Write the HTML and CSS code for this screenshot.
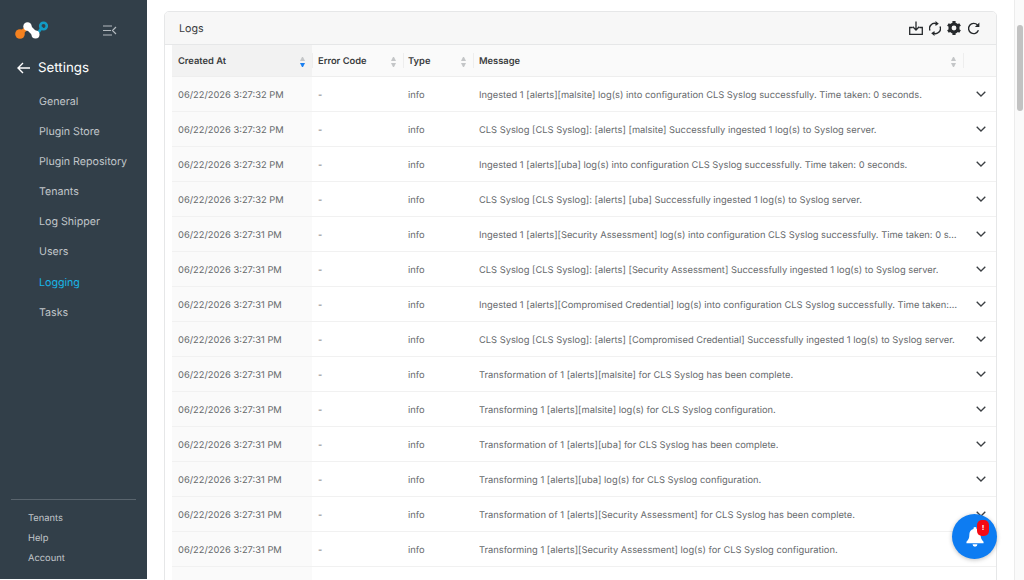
FILE: index.html
```html
<!DOCTYPE html>
<html lang="en">
<head>
    <meta charset="UTF-8">
    <meta name="viewport" content="width=device-width, initial-scale=1.0">
    <title>Logs</title>
    <link rel="stylesheet" href="styles.css">
</head>
<body>
    <aside class="sidebar">
        <div class="brand">
            <svg class="logo" width="36" height="22" viewBox="0 0 36 22" fill="none">
                <path d="M6 14 L12 8.500" stroke="#f58220" stroke-width="4" stroke-linecap="round"/>
                <circle cx="6" cy="14" r="4.800" fill="#f58220"/>
                <path d="M25 11.500 L27.500 8" stroke="#129bc4" stroke-width="2.800" stroke-linecap="round"/>
                <circle cx="29.500" cy="6" r="3.300" stroke="#129bc4" stroke-width="2.600"/>
                <path d="M13.500 6.500 L21.500 14.500" stroke="#fff" stroke-width="5.500" stroke-linecap="round"/>
                <circle cx="13.500" cy="6.500" r="4.200" fill="#fff"/>
                <circle cx="21.500" cy="14.500" r="4" fill="#fff"/>
            </svg>
            <svg class="collapse" width="14" height="11" viewBox="0 0 14 11" fill="none" stroke="#b4babf" stroke-width="1.200">
                <path d="M0 1 H9 M0 5.500 H8 M0 10 H9 M13 2 L9.500 5.500 L13 9"/>
            </svg>
        </div>
        <div class="back">
            <svg width="14" height="12" viewBox="0 0 14 12" fill="none" stroke="#fff" stroke-width="1.400">
                <path d="M13 6 H1 M6 1 L1 6 L6 11"/>
            </svg>
            <span>Settings</span>
        </div>
        <nav class="side-nav">
            <a href="#">General</a>
            <a href="#">Plugin Store</a>
            <a href="#">Plugin Repository</a>
            <a href="#">Tenants</a>
            <a href="#">Log Shipper</a>
            <a href="#">Users</a>
            <a href="#" class="active">Logging</a>
            <a href="#">Tasks</a>
        </nav>
        <div class="side-foot">
            <a href="#">Tenants</a>
            <a href="#">Help</a>
            <a href="#">Account</a>
        </div>
    </aside>

    <main class="content">
        <section class="card">
            <header class="card-head">
                <span>Logs</span>
                <div class="tools">
                    <svg width="14" height="14" viewBox="0 0 14 14" fill="none" stroke="#26292c" stroke-width="1.300">
                        <path d="M7 0.500 V9 M3.800 5.800 L7 9 L10.200 5.800 M3.500 6.500 H0.700 V13.300 H13.300 V6.500 H10.500"/>
                    </svg>
                    <svg width="12" height="15" viewBox="0 0 12 15" fill="none" stroke="#26292c" stroke-width="1.400">
                        <path d="M1 9.500 A5 5 0 0 1 7.500 2.800 M11 5.500 A5 5 0 0 1 4.500 12.200"/>
                        <path d="M6.500 0 L9.800 2.800 L6.500 5 Z M5.500 10 L2.200 12.200 L5.500 15 Z" fill="#26292c" stroke="none"/>
                    </svg>
                    <svg width="14" height="14" viewBox="0.500 0.500 15 15" fill="none" stroke="#26292c">
                        <circle cx="8" cy="8" r="4.300" stroke-width="3.400"/>
                        <path stroke-width="3.400" d="M8 0.500 V3 M14.500 4.250 L12.330 5.500 M14.500 11.750 L12.330 10.500 M8 15.500 V13 M1.500 11.750 L3.670 10.500 M1.500 4.250 L3.670 5.500"/>
                    </svg>
                    <svg width="13" height="13" viewBox="0 0 14 14" fill="none" stroke="#26292c" stroke-width="1.500">
                        <path d="M12.300 9 A5.500 5.500 0 1 1 11.300 3.300"/>
                        <path d="M13.300 0.500 V5.300 H8.500 Z" fill="#26292c" stroke="none"/>
                    </svg>
                </div>
            </header>
            <div class="log-table">
                <div class="log-row head-row">
                    <div class="cell sorted"><b>Created At</b><i class="sort on"></i></div>
                    <div class="cell"><b>Error Code</b><i class="sort"></i></div>
                    <div class="cell"><b>Type</b><i class="sort"></i></div>
                    <div class="cell"><b>Message</b><i class="sort"></i></div>
                    <div class="cell"></div>
                </div>
                <div id="rows"></div>
            </div>
        </section>
    </main>

    <div class="scrollbar"><div class="thumb"></div></div>

    <button class="bell" type="button">
        <svg width="18" height="20" viewBox="0 0 20 22">
            <path fill="#fff" d="M10 0 A1.700 1.700 0 0 1 11.700 2 C14.800 2.800 16.300 5.300 16.300 8.500 C16.300 12.500 17.300 14 19.500 16.200 V18 H0.500 V16.200 C2.700 14 3.700 12.500 3.700 8.500 C3.700 5.300 5.200 2.800 8.300 2 A1.700 1.700 0 0 1 10 0 Z M7.300 19 H12.700 A2.700 2.700 0 0 1 7.300 19 Z"/>
        </svg>
        <span class="badge">!</span>
    </button>

    <script src="rows.js"></script>
</body>
</html>
```
FILE: rows.js
```js
const logs = [
    ['06/22/2026 3:27:32 PM', 'Ingested 1 [alerts][malsite] log(s) into configuration CLS Syslog successfully. Time taken: 0 seconds.'],
    ['06/22/2026 3:27:32 PM', 'CLS Syslog [CLS Syslog]: [alerts] [malsite] Successfully ingested 1 log(s) to Syslog server.'],
    ['06/22/2026 3:27:32 PM', 'Ingested 1 [alerts][uba] log(s) into configuration CLS Syslog successfully. Time taken: 0 seconds.'],
    ['06/22/2026 3:27:32 PM', 'CLS Syslog [CLS Syslog]: [alerts] [uba] Successfully ingested 1 log(s) to Syslog server.'],
    ['06/22/2026 3:27:31 PM', 'Ingested 1 [alerts][Security Assessment] log(s) into configuration CLS Syslog successfully. Time taken: 0 seconds.'],
    ['06/22/2026 3:27:31 PM', 'CLS Syslog [CLS Syslog]: [alerts] [Security Assessment] Successfully ingested 1 log(s) to Syslog server.'],
    ['06/22/2026 3:27:31 PM', 'Ingested 1 [alerts][Compromised Credential] log(s) into configuration CLS Syslog successfully. Time taken: 0 seconds.'],
    ['06/22/2026 3:27:31 PM', 'CLS Syslog [CLS Syslog]: [alerts] [Compromised Credential] Successfully ingested 1 log(s) to Syslog server.'],
    ['06/22/2026 3:27:31 PM', 'Transformation of 1 [alerts][malsite] for CLS Syslog has been complete.'],
    ['06/22/2026 3:27:31 PM', 'Transforming 1 [alerts][malsite] log(s) for CLS Syslog configuration.'],
    ['06/22/2026 3:27:31 PM', 'Transformation of 1 [alerts][uba] for CLS Syslog has been complete.'],
    ['06/22/2026 3:27:31 PM', 'Transforming 1 [alerts][uba] log(s) for CLS Syslog configuration.'],
    ['06/22/2026 3:27:31 PM', 'Transformation of 1 [alerts][Security Assessment] for CLS Syslog has been complete.'],
    ['06/22/2026 3:27:31 PM', 'Transforming 1 [alerts][Security Assessment] log(s) for CLS Syslog configuration.'],
    ['06/22/2026 3:27:31 PM', 'Transformation of 1 [alerts][Compromised Credential] for CLS Syslog has been complete.']
];

const chevron = '<svg width="10" height="6" viewBox="0 0 10 6" fill="none" stroke="#3b3f43" stroke-width="1.300"><path d="M0.700 0.700 L5 5 L9.300 0.700"/></svg>';

document.getElementById('rows').innerHTML = logs.map(log => `
    <div class="log-row">
        <div class="cell sorted">${log[0]}</div>
        <div class="cell">-</div>
        <div class="cell">info</div>
        <div class="cell msg"><span>${log[1]}</span></div>
        <div class="cell arrow">${chevron}</div>
    </div>`).join('');
```
FILE: styles.css
```css
* {
    margin: 0;
    padding: 0;
    box-sizing: border-box;
}

body {
    width: 1024px;
    height: 580px;
    display: flex;
    overflow: hidden;
    font-family: Inter, "Liberation Sans", sans-serif;
    font-size: 9.330px;
    text-rendering: geometricPrecision;
    color: #66696c;
    background: #fff;
}

.sidebar {
    width: 147px;
    flex-shrink: 0;
    height: 579px;
    display: flex;
    flex-direction: column;
    background: #323f49;
}

.brand {
    display: flex;
    align-items: center;
    justify-content: space-between;
    padding: 20px 30px 0 14px;
}

.collapse {
    margin-top: -1px;
}

.back {
    display: flex;
    align-items: center;
    gap: 7px;
    margin-top: 15px;
    padding-left: 17px;
    color: #fff;
    font-size: 13.330px;
    line-height: 22px;
}

.side-nav {
    display: flex;
    flex-direction: column;
    margin-top: 8px;
}

.side-nav a {
    padding-left: 39px;
    line-height: 30.100px;
    font-size: 10.670px;
    color: #c1c6ca;
    text-decoration: none;
}

.side-nav a.active {
    color: #19b5e6;
}

.side-foot {
    margin: auto 11px 0;
    padding: 9px 0 10px 17px;
    border-top: 1px solid #59646d;
    display: flex;
    flex-direction: column;
}

.side-foot a {
    line-height: 20px;
    font-size: 9.330px;
    color: #c1c6ca;
    text-decoration: none;
}

.content {
    flex: 1;
    padding: 11px 27px 0 17px;
    overflow: hidden;
}

.card {
    border: 1px solid #e6e7e8;
    border-radius: 5px 5px 0 0;
    height: 600px;
    overflow: hidden;
}

.card-head {
    height: 33px;
    display: flex;
    align-items: center;
    justify-content: space-between;
    padding: 0 16px 0 14px;
    background: #f7f7f7;
    border-bottom: 1px solid #e6e7e8;
    color: #3a3d40;
    font-size: 10.670px;
}

.tools {
    display: flex;
    align-items: center;
    gap: 6px;
}

.log-table {
    padding-left: 7px;
}

.log-row {
    display: grid;
    grid-template-columns: 140px 91px 70px 490px 1fr;
    height: 35px;
    border-bottom: 1px solid #f1f1f1;
}

.head-row {
    height: 32px;
    background: #fafafa;
    border-bottom-color: #eeeeee;
}

.cell {
    display: flex;
    align-items: center;
    padding: 2px 6px 0;
    min-width: 0;
}

.cell:nth-child(3) {
    padding-left: 5px;
}

.sorted {
    background: #fafafa;
}

.head-row .sorted {
    background: #f2f2f2;
}

.head-row .cell {
    justify-content: space-between;
    position: relative;
}

.head-row .cell b {
    font-weight: 600;
    color: #3a3d40;
}

.head-row .cell + .cell::before {
    content: '';
    position: absolute;
    left: 0;
    top: 8px;
    bottom: 8px;
    width: 1px;
    background: #eeeeee;
}

.sort {
    width: 5px;
    height: 10px;
    margin-right: 1px;
    display: flex;
    flex-direction: column;
    justify-content: space-between;
}

.sort::before,
.sort::after {
    content: '';
    border-left: 2.500px solid transparent;
    border-right: 2.500px solid transparent;
}

.sort::before {
    border-bottom: 4px solid #c4c6c8;
}

.sort::after {
    border-top: 4px solid #c4c6c8;
}

.sort.on::after {
    border-top-color: #1a7ff0;
}

.msg {
    padding-right: 5px;
}

.msg span {
    white-space: nowrap;
    overflow: hidden;
    text-overflow: ellipsis;
}

.arrow {
    justify-content: center;
    padding: 0 6px 0 9px;
}

.scrollbar {
    position: fixed;
    top: 0;
    right: 0;
    width: 10px;
    height: 580px;
    background: #fafafa;
    border-left: 1px solid #ececec;
}

.thumb {
    width: 6px;
    height: 86px;
    margin: 25px 0 0 2px;
    border-radius: 3px;
    background: #c2c2c2;
}

.bell {
    position: fixed;
    left: 952px;
    top: 514px;
    width: 45px;
    height: 45px;
    border: none;
    border-radius: 50%;
    display: flex;
    align-items: center;
    justify-content: center;
    background: #0d7cf2;
    box-shadow: 0 1px 4px rgba(0, 0, 0, 0.25);
}

.badge {
    position: absolute;
    left: 25px;
    top: 6px;
    width: 12px;
    height: 16px;
    border-radius: 5px;
    background: #f50a14;
    color: #fff;
    font-size: 8px;
    font-weight: 700;
    line-height: 16px;
    text-align: center;
}
```
